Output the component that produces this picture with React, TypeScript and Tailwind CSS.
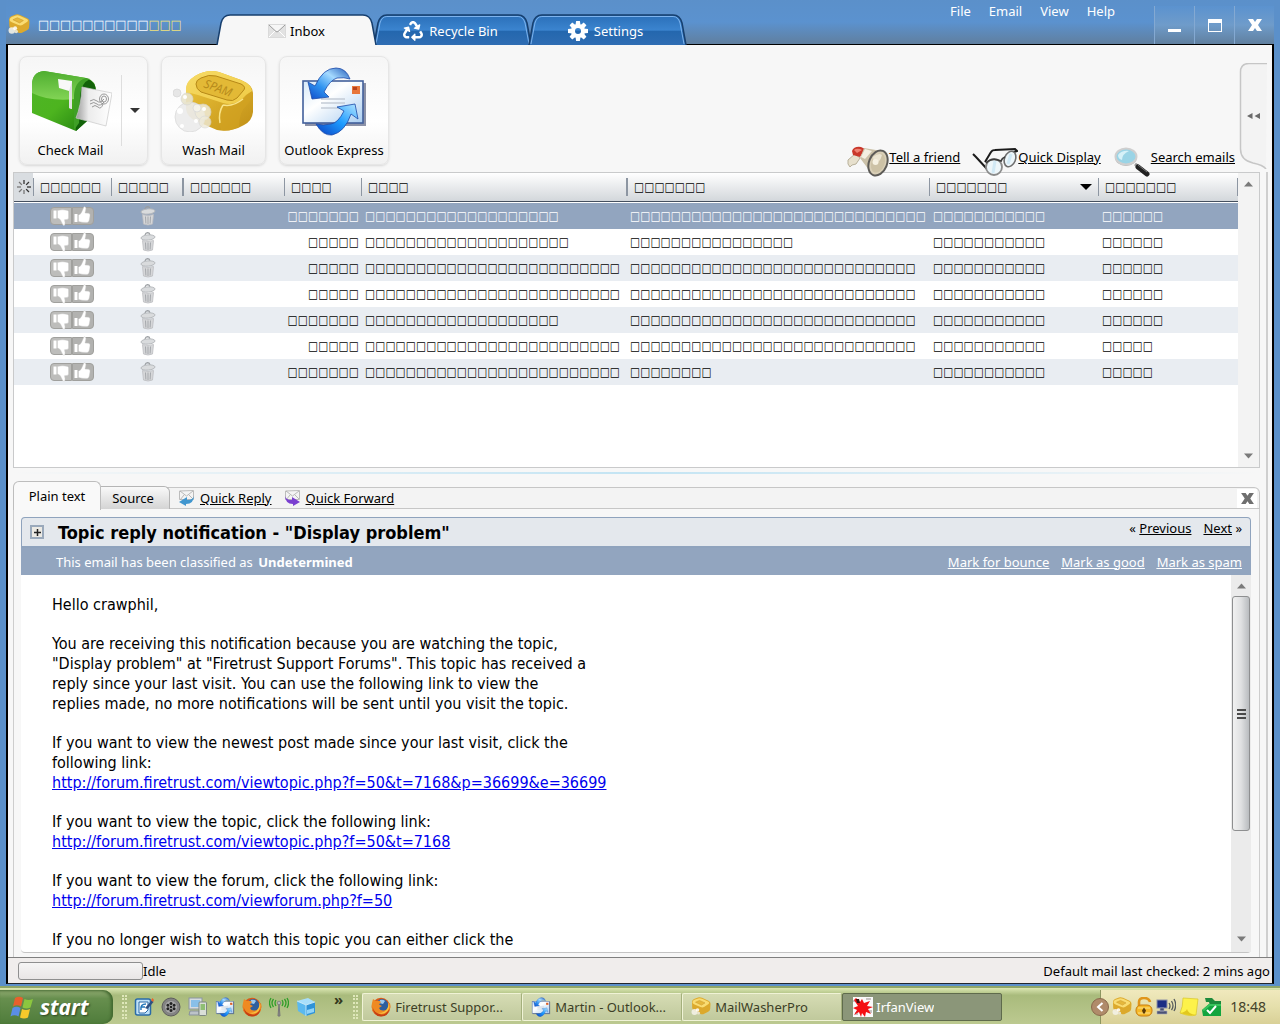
import React from "react";
import { FaRecycle } from "react-icons/fa";

const box = (n: number) => "□".repeat(n);

type Mail = { size: number; from: number; subject: number; date: number; account: number };

const mails: Mail[] = [
  { size: 7, from: 19, subject: 29, date: 11, account: 6 },
  { size: 5, from: 20, subject: 16, date: 11, account: 6 },
  { size: 5, from: 25, subject: 28, date: 11, account: 6 },
  { size: 5, from: 25, subject: 28, date: 11, account: 6 },
  { size: 7, from: 19, subject: 28, date: 11, account: 6 },
  { size: 5, from: 25, subject: 28, date: 11, account: 5 },
  { size: 7, from: 25, subject: 8, date: 11, account: 5 },
];

const columns = [
  { width: "w-[78px]", label: 6, thick: false },
  { width: "w-[71px]", label: 5, thick: true },
  { width: "w-[102px]", label: 6, thick: false },
  { width: "w-[77px]", label: 4, thick: false },
  { width: "w-[265px]", label: 4, thick: true },
  { width: "w-[303px]", label: 7, thick: false },
  { width: "w-[169px]", label: 7, thick: false, sorted: true },
  { width: "w-auto", label: 7, thick: false },
];

/* ---------- Icons ---------- */

function SoapIcon({ className = "" }: { className?: string }) {
  return (
    <svg viewBox="0 0 20 20" className={className} aria-hidden="true">
      <path d="M1 5q0-2 2-3l4-1.500q2-.5 4 .3l6.500 3q2 1 2 3l-.3 5q0 2-2 3l-4 2q-2 1-4 0l-6-3q-2-1-2-3z" fill="#dca92c" />
      <path d="M1.500 5.500q0-2 2-2.800l3.800-1.300q1.700-.5 3.700.4l6 2.700q2 1 .5 2.500l-4.500 3q-1.500.9-3.500 0l-6-2.500q-2-.8-2-2z" fill="#f9dc72" />
      <path d="M4.500 5.200l4-1.800 5.500 2.500-3.500 2.200z" fill="#e5b73c" stroke="#c8962a" strokeWidth=".5" />
      <circle cx="3.500" cy="15" r="3" fill="#f3f1e6" opacity=".9" />
      <circle cx="6.500" cy="13" r="1.800" fill="#fff" opacity=".85" />
      <circle cx="7.500" cy="16" r="1.600" fill="#e8e3cd" />
    </svg>
  );
}

function EnvelopeIcon() {
  return (
    <svg viewBox="0 0 18 14" className="h-[14px] w-[18px]" aria-hidden="true">
      <rect x=".5" y=".5" width="17" height="13" fill="#e2e2e2" stroke="#dadada" />
      <path d="M1 13l6-6M17 13l-6-6" stroke="#fff" />
      <path d="M1 1l7 6.500q1 .8 2 0L17 1" fill="#f6f6f6" stroke="#9b9b9b" />
    </svg>
  );
}

function GearIcon() {
  return (
    <svg viewBox="-10 -10 20 20" className="h-5 w-5" aria-hidden="true">
      {[0, 45, 90, 135, 180, 225, 270, 315].map((a) => (
        <path key={a} d="M-2.600-5L-1.900-10H1.900L2.600-5z" fill="#fff" transform={`rotate(${a})`} />
      ))}
      <circle r="5" fill="none" stroke="#fff" strokeWidth="4" />
    </svg>
  );
}

function MailboxIcon() {
  return (
    <svg viewBox="0 0 82 64" className="h-16 w-[82px]" aria-hidden="true">
      <defs>
        <linearGradient id="mbSide" x1="0" y1="0" x2="1" y2="1">
          <stop offset="0" stopColor="#4fb528" />
          <stop offset=".5" stopColor="#4db41f" />
          <stop offset="1" stopColor="#1c7a0e" />
        </linearGradient>
        <linearGradient id="mbGloss" x1="0" y1="0" x2="0" y2="1">
          <stop offset="0" stopColor="#4fae30" />
          <stop offset="1" stopColor="#82d455" />
        </linearGradient>
        <linearGradient id="mbLetter" x1="0" y1="0" x2="1" y2="0">
          <stop offset="0" stopColor="#9c9c9c" />
          <stop offset=".35" stopColor="#ececec" />
          <stop offset="1" stopColor="#fff" />
        </linearGradient>
      </defs>
      <path d="M2 45V17Q2 4 14 3l42 7q10 2 10 14v21L46 63z" fill="url(#mbSide)" />
      <path d="M2 17Q2 4 14 3l42 7q-10 3-11 17v4Q20 34 2 25z" fill="url(#mbGloss)" />
      <path d="M46 63V28q1-15 12-17 8 3 8 13v21z" fill="#126209" />
      <path d="M44 62V27q1-14 12-17l4 1q-9 4-10 17l-1 27z" fill="#3f9f26" />
      <path d="M52 19l30 6-6 33-30-8q5-12 6-31z" fill="url(#mbLetter)" stroke="#c9c9c9" strokeWidth=".7" />
      <g fill="none" stroke="#8d8d8d" strokeWidth=".9">
        <ellipse cx="74" cy="31" rx="4.500" ry="5" />
        <ellipse cx="74" cy="31" rx="2.500" ry="3" />
        <path d="M60 33q4-3 7 0t7-2M60 36q4-3 7 0t7-2M62 39q3-3 6 0t5-3" />
      </g>
      <path d="M28 11l14 2v28l-3-1V23l-10-3z" fill="#f8f8f8" />
      <path d="M39 23v17l3 1V14z" fill="#e2e2e2" />
    </svg>
  );
}

function WashIcon() {
  return (
    <svg viewBox="0 0 82 64" className="h-16 w-[82px]" aria-hidden="true">
      <defs>
        <linearGradient id="wsTop" x1="0" y1="0" x2="1" y2="1">
          <stop offset="0" stopColor="#f6da66" />
          <stop offset="1" stopColor="#f0cb45" />
        </linearGradient>
        <linearGradient id="wsSide" x1="0" y1="0" x2="1" y2="1">
          <stop offset="0" stopColor="#f0c93e" />
          <stop offset="1" stopColor="#c08f16" />
        </linearGradient>
      </defs>
      <path d="M13 22q0-8 9-14 12-7 24-4l22 8q12 5 12 13v19q-1 9-9 13-14 8-27 5l-21-9q-9-4-10-12z" fill="url(#wsSide)" />
      <path d="M13 21q0-8 9-13 12-7 24-4l22 8q11 5 11 11-5 3-9 8-9 7-20 4l-25-8q-11-3-12-2z" fill="url(#wsTop)" />
      <path d="M50 36q10 2 19-5 5-6 10-7 0 8-5 13-8 7-8 22-10 5-18 3-5-14 2-26z" fill="#d2a322" opacity=".65" />
      <path d="M50 37q10 2 20-6M50 37q-5 8-3 18" fill="none" stroke="#f9e489" strokeWidth="1.500" />
      <path d="M23 16q0-4 5-6 8-4 15-2l25 8q6 3 2 7l-6 7q-4 4-10 2l-26-8q-5-3-5-8z" fill="#e3b936" stroke="#b68817" />
      <text x="30" y="19" transform="rotate(20 30 19)" fontFamily="Noto Sans, sans-serif" fontStyle="italic" fontSize="12" fill="#b88c1c">SPAM</text>
      <g stroke="#d6d6d6" strokeWidth=".7">
        <circle cx="4" cy="25" r="4" fill="#e6e6e6" />
        <circle cx="17" cy="49" r="15" fill="#ececec" opacity=".93" />
        <circle cx="14" cy="31" r="6" fill="#e9e4cc" opacity=".9" />
        <circle cx="30" cy="44" r="8" fill="#efebda" opacity=".85" />
        <circle cx="32" cy="54" r="6" fill="#eeead9" opacity=".8" />
        <circle cx="24" cy="40" r="4" fill="#f6f4ec" opacity=".9" />
      </g>
      <g fill="#fff">
        <circle cx="7" cy="43" r="3" />
        <circle cx="12" cy="29" r="2" />
        <circle cx="31" cy="41" r="2" />
        <circle cx="9" cy="58" r="2" />
        <circle cx="23" cy="53" r="2" />
      </g>
    </svg>
  );
}

function OutlookIcon({ className = "" }: { className?: string }) {
  return (
    <svg viewBox="0 0 66 70" className={className} aria-hidden="true">
      <defs>
        <linearGradient id="oeMail" x1="0" y1="0" x2="1" y2="1">
          <stop offset="0" stopColor="#d5e8f8" />
          <stop offset=".4" stopColor="#fff" />
          <stop offset="1" stopColor="#a9cdf0" />
        </linearGradient>
        <linearGradient id="oeDown" x1="1" y1="0" x2="0" y2="1">
          <stop offset="0" stopColor="#1d57b8" />
          <stop offset=".35" stopColor="#a5daff" />
          <stop offset=".65" stopColor="#2f93f0" />
          <stop offset="1" stopColor="#0e49c8" />
        </linearGradient>
        <linearGradient id="oeUp" x1="0" y1="1" x2="1" y2="0">
          <stop offset="0" stopColor="#0b3fc0" />
          <stop offset=".5" stopColor="#1d9cff" />
          <stop offset="1" stopColor="#b5e6ff" />
        </linearGradient>
      </defs>
      <rect x="4" y="17" width="61" height="43" fill="#3f4a6e" opacity=".6" />
      <rect x="2" y="15" width="60" height="42" fill="url(#oeMail)" stroke="#42609c" strokeWidth="1.600" />
      <path d="M20 33h24M20 37h24M20 42h24" stroke="#c4ccd6" strokeWidth="1.600" />
      <rect x="51" y="20" width="8" height="8" fill="#e8763a" />
      <path d="M52 21h4v3h-4z" fill="#b8431c" />
      <path d="M49 13Q45 2 35 2 22 2 14 20L7 16l4 17 17-2-5-5Q29 14 36 12q7-1 13 1z" fill="url(#oeDown)" stroke="#1c49a8" strokeWidth=".8" />
      <path d="M15 58q7 12 16 11 13-3 19-21l7 5-3-15-18 3 7 4q-6 12-13 13-8 2-15 0z" fill="url(#oeUp)" stroke="#1c49a8" strokeWidth=".8" />
    </svg>
  );
}

function MegaphoneIcon() {
  return (
    <svg viewBox="0 0 42 32" className="h-8 w-[42px] shrink-0" aria-hidden="true">
      <path d="M1 15l7-6 5 4-4 6-4 1-2 2-2-3z" fill="#e7e0cd" stroke="#b8b09a" strokeWidth="1" />
      <path d="M5 6q2-5 9-4l4 2-5 8-7-2z" fill="#c9372a" />
      <path d="M7 5q2-2 6-1l2 1-5 3z" fill="#ef8272" />
      <path d="M17 3l18 3q-9 5-13 19l-9-12z" fill="#cbc1a8" />
      <path d="M14 12l4-8 7 2-7 8z" fill="#f4efe1" />
      <ellipse cx="31" cy="18" rx="9" ry="13" transform="rotate(22 31 18)" fill="#d9cfb7" stroke="#5d5b57" strokeWidth="2" />
      <ellipse cx="31" cy="18" rx="6.500" ry="10" transform="rotate(22 31 18)" fill="#cdc2a6" />
      <path d="M26 12q6-5 9-2-2 8-8 9z" fill="#ece5d2" />
      <circle cx="28.500" cy="17" r="3" fill="#f6f1e2" />
    </svg>
  );
}

function GlassesIcon() {
  return (
    <svg viewBox="0 0 46 30" className="h-[30px] w-[46px] shrink-0" aria-hidden="true">
      <path d="M1 7l3 3 11 12M13 15L19 5q1-2 4-2l20-1 2 2-6 2" fill="none" stroke="#1b1b1b" strokeWidth="2" />
      <ellipse cx="22" cy="20" rx="8" ry="8" fill="#edf6fa" stroke="#8b8b8b" strokeWidth="1.800" />
      <ellipse cx="38" cy="12" rx="5.500" ry="8" transform="rotate(22 38 12)" fill="#edf6fa" stroke="#6e6e6e" strokeWidth="1.600" />
      <path d="M14 16q6-6 15-2 1-3 4-4" fill="none" stroke="#3c3c3c" strokeWidth="1.800" />
      <path d="M23 14l-2 12M39 7l-3 10" stroke="#bfe1f3" strokeWidth="3" opacity=".6" />
    </svg>
  );
}

function MagnifierIcon() {
  return (
    <svg viewBox="0 0 38 30" className="h-[30px] w-[38px] shrink-0" aria-hidden="true">
      <path d="M22 17l4 3" stroke="#999" strokeWidth="3" />
      <path d="M25 20l9 7" stroke="#222" strokeWidth="5" strokeLinecap="round" />
      <path d="M25 18l9 7" stroke="#777" strokeWidth="1" />
      <ellipse cx="13" cy="10.500" rx="11" ry="8.500" fill="#b6b6b6" />
      <ellipse cx="13" cy="9.500" rx="10.500" ry="8" fill="#9ad4e6" stroke="#cfcfcf" strokeWidth="2" />
      <path d="M5 8q4-5 11-4-7 3-7 9-4-1-4-5z" fill="#d6f1f8" />
    </svg>
  );
}

function ThumbDown() {
  return (
    <svg viewBox="0 0 20 20" className="h-5 w-5 shrink-0" aria-hidden="true">
      <path d="M2.500 4.500h3v8h-3z" fill="#fff" />
      <path d="M6.500 4.500q5-1.500 10 0 1.500.5 1 2.500v5q0 1.500-2 1.500l-2 .2q.8 3 .3 5-.6 1.300-1.800.2L9.500 14q-1-1.500-3-2z" fill="#fff" stroke="#c9c9c9" strokeWidth=".4" />
    </svg>
  );
}

function ThumbUp() {
  return (
    <svg viewBox="0 0 20 20" className="h-5 w-5 shrink-0" aria-hidden="true">
      <path d="M1.500 8h3v8h-3z" fill="#fff" />
      <path d="M5.500 9q2-.5 3-2.500L10.500 2q.3-1.700 1.500-1.200 1.500.7.700 3.200L12 7l3.500.2q2 .3 1.500 2.500l-.8 4.500q-.4 2-2 2.200-4.500.3-8.700-1z" fill="#fff" stroke="#c9c9c9" strokeWidth=".4" />
    </svg>
  );
}

function TrashIcon() {
  return (
    <svg viewBox="0 0 16 20" className="h-5 w-4" aria-hidden="true">
      <path d="M5 3q1-3 4-2l1 2" fill="none" stroke="#999da1" strokeWidth="1.300" />
      <ellipse cx="8" cy="5.500" rx="7" ry="2.600" fill="#d9dbdd" stroke="#b3b6b9" strokeWidth=".9" transform="rotate(-5 8 5.500)" />
      <path d="M2.500 8.500q5.500 2 11 0L12.500 18q-4.500 2-9 0z" fill="#d6d7d9" stroke="#bbbdc0" strokeWidth=".8" />
      <path d="M5.500 10.500l.4 7M8 10.500v7.500M10.500 10.500l-.4 7" stroke="#a4a7ab" strokeWidth="1" />
    </svg>
  );
}

function BurstIcon() {
  return (
    <svg viewBox="-8 -8 16 16" className="mx-auto h-4 w-4" aria-hidden="true">
      {[0, 45, 90, 135, 180, 225, 270, 315].map((a, i) => (
        <path key={a} d="M0-3V-7" stroke={i > 3 ? "#777" : "#333"} strokeWidth="1.300" transform={`rotate(${a})`} />
      ))}
    </svg>
  );
}

function MailArrowIcon({ forward = false }: { forward?: boolean }) {
  return (
    <svg viewBox="0 0 17 16" className="h-4 w-[17px]" aria-hidden="true">
      <path d="M1.500 1l14-.5v9h-14z" fill="#f4f4f4" stroke="#bcbcbc" />
      <path d="M2 1l6.500 5L15 1M2 10l4-5M15 9l-4-4" fill="none" stroke="#a8a8a8" strokeWidth=".8" />
      {forward ? (
        <path d="M1 5q0 5 7 5V7l8 5-7 4v-2Q1 14 1 5z" fill="#7a3fd0" />
      ) : (
        <path d="M16 5q0 5-7 5V7l-8 5 7 4v-2q8 0 8-9z" fill="#4096cf" />
      )}
    </svg>
  );
}

function WindowsFlag() {
  return (
    <svg viewBox="0 0 24 23" className="h-[23px] w-6" aria-hidden="true">
      <path d="M5 2q4-2.500 8 0l-2 8.500q-4-2.500-8 0z" fill="#e8602c" />
      <path d="M14.500 3q4 2 8.500 0l-2.500 8.500q-4 2-8 0z" fill="#8cc63f" />
      <path d="M2.500 12q4-2.500 8 0l-2 8.500q-4-2.500-8 0z" fill="#5a8ee6" />
      <path d="M12 13q4 2 8 0L18 21.500q-4 2-8 0z" fill="#f5c92b" />
    </svg>
  );
}

function FirefoxIcon() {
  return (
    <svg viewBox="0 0 20 20" className="h-5 w-5 shrink-0" aria-hidden="true">
      <circle cx="10" cy="10" r="9.300" fill="#d9591a" />
      <circle cx="11" cy="8.500" r="6.500" fill="#2f5f9e" />
      <path d="M9 3q3-1 5 1l-2 3-4-1z" fill="#9cc8ec" />
      <path d="M1 6l1-4 3 2q3-1 5 1L8 7.500l3 1.500-3 2q1 3 5 2.500 4-.5 4.500-5L19 6q1.500 7-3 11-5 3.500-10.500 1Q-.5 14 1 6z" fill="#ef8a22" />
      <path d="M1.500 10q2 7 9 7.500 5 0 8-6-1 8-8.500 8T1.500 10z" fill="#c63f12" />
      <path d="M17.500 5q2 5-1 9-4 4-9 2 7 0 9-5 1-2 1-6z" fill="#f9c440" />
    </svg>
  );
}

function NotesIcon() {
  return (
    <svg viewBox="0 0 20 20" className="h-5 w-5" aria-hidden="true">
      <rect x="1.500" y="2" width="15" height="16" rx="2" fill="#bfe1f8" stroke="#2a6ba8" strokeWidth="1.500" />
      <path d="M5 5h9v8l-3 3H5z" fill="#fff" stroke="#2a6ba8" />
      <path d="M7 13q-1-6 5-6M7 10h4" fill="none" stroke="#2277bb" strokeWidth="1.500" />
      <path d="M11 11l7-8 1.500 2-6 7z" fill="#2e4f80" />
      <path d="M17 3l1.500-2 1.500 2-1 2z" fill="#e8632c" />
    </svg>
  );
}

function ReelIcon() {
  return (
    <svg viewBox="0 0 20 20" className="h-5 w-5" aria-hidden="true">
      <circle cx="10" cy="10" r="9" fill="#838383" stroke="#5d5d5d" />
      <circle cx="10" cy="10" r="6" fill="#a9a9a9" />
      {[0, 60, 120, 180, 240, 300].map((a) => (
        <circle key={a} cy="-3.600" r="1.500" fill="#222" transform={`translate(10 10) rotate(${a})`} />
      ))}
      <circle cx="10" cy="10" r="1.300" fill="#222" />
    </svg>
  );
}

function DevicesIcon() {
  return (
    <svg viewBox="0 0 20 20" className="h-5 w-5" aria-hidden="true">
      <rect x="1" y="1" width="13" height="11" fill="#d5dbe0" stroke="#8b969f" />
      <rect x="3" y="3" width="9" height="7" fill="#88bfe8" />
      <path d="M2 14h9v4H1z" fill="#bcc3c8" stroke="#87919a" />
      <rect x="11" y="5" width="7.500" height="13.500" rx="1" fill="#dadfd8" stroke="#7d8881" />
      <rect x="12.500" y="7" width="4.500" height="6" fill="#8fbf74" />
    </svg>
  );
}

function AntennaIcon() {
  return (
    <svg viewBox="0 0 20 20" className="h-5 w-5" aria-hidden="true">
      <path d="M10 7l-1 12h2z" fill="#8a8a8a" stroke="#777" />
      <circle cx="10" cy="6" r="1.800" fill="#b5b5b5" stroke="#666" strokeWidth=".6" />
      <path d="M7 3q-2 3 0 6M4.500 2q-3 4 0 8M2 1q-3 5 0 10M13 3q2 3 0 6M15.500 2q3 4 0 8M18 1q3 5 0 10" fill="none" stroke="#2f9e28" strokeWidth="1.300" />
    </svg>
  );
}

function CubeIcon() {
  return (
    <svg viewBox="0 0 20 20" className="h-5 w-5" aria-hidden="true">
      <path d="M1 4l11-3 7 4-9 3z" fill="#a8dffb" />
      <path d="M1 4l9 4v11l-8-5z" fill="#5bb9ef" />
      <path d="M10 8l9-3v11l-9 3z" fill="#2f93d8" />
      <path d="M11 13l7-2v4l-7 2z" fill="#8fd3f8" />
      <path d="M1 4l9 4 9-3M10 8v11" fill="none" stroke="#d5f1ff" strokeWidth=".8" />
    </svg>
  );
}

function SplatIcon() {
  return (
    <svg viewBox="0 0 20 20" className="h-5 w-5 shrink-0" aria-hidden="true">
      <rect width="20" height="20" fill="#fafafa" />
      <path d="M0 3h4v2H0zM13 1h5v2h-5zM16 13h3v3h-3zM2 15h3v3H2z" fill="#c9c4c4" />
      <path d="M3 1l4 4 2-3 2 4 6-2-3 5 6 1-5 2 3 5-5-2-1 5-3-4-1 4-2-5-5 3 3-5-4-2 5-2-4-6z" fill="#f40f12" />
      <path d="M3 2l3 0 1 4-3 0z" fill="#401010" />
    </svg>
  );
}

function LockIcon() {
  return (
    <svg viewBox="0 0 18 20" className="h-5 w-[18px]" aria-hidden="true">
      <path d="M4 9V5q0-4 5-4t6 4" fill="none" stroke="#e0951b" strokeWidth="2.600" />
      <rect x="1" y="8" width="16" height="11" rx="5" fill="#f6b928" stroke="#c87d10" />
      <path d="M3 11h12M3 16h12" stroke="#fde28b" />
      <path d="M9 10.500l2 3-1.200 3H8.200L7 13.500z" fill="#5c3b06" />
    </svg>
  );
}

function NetworkIcon() {
  return (
    <svg viewBox="0 0 20 18" className="h-[18px] w-5" aria-hidden="true">
      <rect x="1" y="2" width="10" height="8" fill="#1d2f84" stroke="#8d92a8" />
      <path d="M4 10h4v3H4zM1 13h10v3H1z" fill="#4b5274" stroke="#a8abbc" strokeWidth=".6" />
      <path d="M13 5q2 3 0 6M15.500 3q3 5 0 9M18 1q3.500 6 0 12" fill="none" stroke="#555a5c" strokeWidth="1.300" />
    </svg>
  );
}

function StickyIcon() {
  return (
    <svg viewBox="0 0 20 20" className="h-5 w-5" aria-hidden="true">
      <path d="M4 1l15 1-2 16q-6 2-16-2 3-6 3-15z" fill="#fdf24a" stroke="#d8c52a" strokeWidth=".7" />
      <path d="M1 16q6-1 7-4 1 5 9 6-7 1-16-2z" fill="#e2c81f" />
    </svg>
  );
}

function SafeRemoveIcon() {
  return (
    <svg viewBox="0 0 20 20" className="h-5 w-5" aria-hidden="true">
      <path d="M3 1h7l3 3h6v5H8L7 5H4z" fill="#1d8a3c" />
      <path d="M0 13l7-6h12v12H1z" fill="#12a53e" />
      <path d="M0 13l7-6h12v2H8l-6 5z" fill="#37c35c" />
      <path d="M5 13l3 3 6-7" fill="none" stroke="#fff" strokeWidth="2" />
    </svg>
  );
}

function Triangle({ up = false }: { up?: boolean }) {
  return (
    <svg viewBox="0 0 9 6" className="h-[6px] w-[9px]" aria-hidden="true">
      <path d={up ? "M0 5.500L4.500.5 9 5.500z" : "M0 .5h9L4.500 5.500z"} fill="#7a7a7a" />
    </svg>
  );
}

/* ---------- Header ---------- */

function Tab({ label, icon, active = false }: { label: string; icon: React.ReactNode; active?: boolean }) {
  return (
    <button
      role="tab"
      aria-selected={active}
      className={
        active
          ? "relative z-10 flex h-[31px] w-[161px] items-center justify-center gap-1 pt-[3px] text-black"
          : "relative -ml-1 flex h-[31px] w-[159px] items-center justify-center gap-[6px] pr-1 pt-[3px] text-white"
      }
    >
      <svg viewBox="0 0 160 31" preserveAspectRatio="none" className="absolute inset-0 h-full w-full" aria-hidden="true">
        <defs>
          <linearGradient id="tabBlue" x1="0" y1="0" x2="0" y2="1">
            <stop offset="0" stopColor="#2a6fb8" />
            <stop offset=".5" stopColor="#3b84cf" />
            <stop offset=".55" stopColor="#2467ae" />
            <stop offset="1" stopColor="#2f6db3" />
          </linearGradient>
        </defs>
        <path
          d="M1 31L5 9Q7 1 14 1H146Q153 1 155 9L159 31"
          fill={active ? "#f7f7f7" : "url(#tabBlue)"}
          stroke="#173f6e"
          strokeWidth="1.500"
        />
        {!active && <path d="M3 30L7 9Q9 2.500 14 2.500H146Q151 2.500 153 9L157 30" fill="none" stroke="#7db4ee" />}
      </svg>
      <span className="relative flex">{icon}</span>
      <span className="relative">{label}</span>
    </button>
  );
}

const windowButton = "flex w-10 justify-center border-l border-[#84a9d2] bg-linear-to-b from-[#5b92cf] via-[#6f9cca] via-50% to-[#607f9f]";

function Header() {
  return (
    <header className="flex h-[45px] shrink-0 justify-between border-b border-black bg-linear-to-b from-[#5b90ca] via-[#5b92cf] to-[#607f9f]">
      <div className="flex min-w-0">
        <div className="flex w-[210px] items-center gap-2 pl-[2px] pt-[6px]">
          <SoapIcon className="h-[22px] w-[22px]" />
          <h1 className="whitespace-nowrap font-['DejaVu_Sans_Condensed','DejaVu_Sans',sans-serif] text-[13px] text-white">
            {box(10)}
            <span className="text-[#f1e27a]">{box(3)}</span>
          </h1>
        </div>
        <div role="tablist" className="-mb-px flex items-end">
          <Tab label="Inbox" icon={<EnvelopeIcon />} active />
          <Tab label="Recycle Bin" icon={<FaRecycle className="h-5 w-5" />} />
          <Tab label="Settings" icon={<GearIcon />} />
        </div>
      </div>
      <div className="flex">
        <nav className="flex items-start gap-[18px] pr-[39px] pt-[2px] text-white">
          {["File", "Email", "View", "Help"].map((m) => (
            <button key={m} className="leading-[18px]">
              {m}
            </button>
          ))}
        </nav>
        <div className="mt-[6px] flex text-white">
          <button aria-label="Minimize" className={`${windowButton} items-end pb-3`}>
            <span className="h-[3px] w-[13px] bg-white" />
          </button>
          <button aria-label="Maximize" className={`${windowButton} items-center`}>
            <span className="h-[13px] w-[14px] border border-t-4 border-white" />
          </button>
          <button aria-label="Close" className={`${windowButton} items-center`}>
            <svg viewBox="0 0 14 12" className="h-3 w-[14px]" aria-hidden="true">
              <path d="M0 0h5l2 3 2-3h5l-4 6 4 6H9L7 9l-2 3H0l4-6z" fill="#fff" />
            </svg>
          </button>
        </div>
      </div>
    </header>
  );
}

/* ---------- Toolbar ---------- */

const tile = "flex h-[109px] rounded-lg border border-[#e6e6e6] bg-linear-to-b from-[#f6f6f6] via-white via-60% to-[#f1f1f1] shadow-sm";

function Toolbar() {
  return (
    <div className="flex h-[127px] shrink-0 justify-between pl-[11px]">
      <div className="flex items-start gap-[13px] pt-[11px]">
        <div className={`${tile} w-[129px]`}>
          <button className="flex w-[101px] flex-col items-center justify-end pb-1">
            <MailboxIcon />
            <span className="mt-2 leading-5">Check Mail</span>
          </button>
          <button aria-label="Check mail options" className="my-[18px] flex flex-1 items-center justify-center border-l border-[#dedede]">
            <svg viewBox="0 0 10 5" className="h-[5px] w-[10px]" aria-hidden="true">
              <path d="M0 0h10L5 5z" fill="#333" />
            </svg>
          </button>
        </div>
        <button className={`${tile} w-[105px] flex-col items-center justify-end pb-1`}>
          <WashIcon />
          <span className="mt-2 leading-5">Wash Mail</span>
        </button>
        <button className={`${tile} w-[110px] flex-col items-center justify-end pb-1`}>
          <OutlookIcon className="h-[70px] w-[66px]" />
          <span className="mt-1 whitespace-nowrap leading-5">Outlook Express</span>
        </button>
      </div>
      <div className="flex">
        <div className="relative z-10 -mb-[5px] flex items-end gap-3 pr-1">
          <a href="#tell" className="flex items-end">
            <MegaphoneIcon />
            <span className="mb-[10px] leading-5 underline">Tell a friend</span>
          </a>
          <a href="#display" className="flex items-end">
            <GlassesIcon />
            <span className="mb-[10px] leading-5 underline">Quick Display</span>
          </a>
          <a href="#search" className="flex items-end">
            <MagnifierIcon />
            <span className="mb-[10px] leading-5 underline">Search emails</span>
          </a>
        </div>
        <button aria-label="Show side panel" className="relative mr-[5px] mt-[18px] flex h-[106px] w-7 items-center justify-center">
          <svg viewBox="0 0 28 106" className="absolute inset-0 h-full w-full" aria-hidden="true">
            <path d="M28 .5H10Q1.500.5 1.500 9V86Q1.500 97 14 100 24 102 27 106" fill="#f3f3f3" stroke="#c6c6c6" strokeWidth="1.500" />
          </svg>
          <svg viewBox="0 0 13 6" className="relative h-[6px] w-[13px]" aria-hidden="true">
            <path d="M5.500 0v6L0 3zM13 0v6L7.500 3z" fill="#6a6a6a" />
          </svg>
        </button>
      </div>
    </div>
  );
}

/* ---------- Mail list ---------- */

function MailList() {
  return (
    <section aria-label="Messages" className="flex h-[296px] shrink-0 border border-[#c9cacb] bg-white">
      <div className="min-w-0 flex-1">
        <table className="w-full table-fixed border-separate border-spacing-0 whitespace-nowrap font-['DejaVu_Sans_Condensed','DejaVu_Sans',sans-serif] text-[12px]">
          <thead>
            <tr className="h-[29px]">
              <th aria-label="New" className="w-[19px] border-b border-[#45505f] bg-[#d9dde1] p-0">
                <BurstIcon />
              </th>
              {columns.map((c, i) => (
                <th key={i} scope="col" className={`${c.width} border-b border-[#45505f] bg-linear-to-b from-white to-[#d3d7db] p-0 text-left font-normal`}>
                  <div className={`flex h-[18px] items-center justify-between pl-[6px] pr-[6px] ${i > 0 && columns[i - 1].thick ? "border-l-2 border-[#8d96a2]" : "border-l border-[#8d96a2]"} ${i === columns.length - 1 ? "border-r" : ""}`}>
                    <span>{box(c.label)}</span>
                    {c.sorted && (
                      <svg viewBox="0 0 12 6" className="h-[6px] w-3" aria-hidden="true">
                        <path d="M0 0h12L6 6z" fill="#000" />
                      </svg>
                    )}
                  </div>
                </th>
              ))}
            </tr>
          </thead>
          <tbody className="before:block before:h-px">
            {mails.map((m, i) => (
              <tr key={i} className={i === 0 ? "h-[26px] bg-[#92a5bf] text-white" : i % 2 === 0 ? "h-[26px] bg-[#e9edf2]" : "h-[26px] bg-white"}>
                <td className="p-0" />
                <td className="p-0">
                  <div className="ml-[17px] flex h-[18px] w-11">
                    <button aria-label="Mark as spam" className="flex w-[22px] items-center justify-center rounded-l-[4px] border border-[#a0a09d] bg-[#bdbdbb]">
                      <ThumbDown />
                    </button>
                    <button aria-label="Mark as good" className="flex w-[22px] items-center justify-center rounded-r-[4px] border border-[#a0a09d] bg-[#b2b2b0]">
                      <ThumbUp />
                    </button>
                  </div>
                </td>
                <td className="p-0">
                  <button aria-label="Delete" className="ml-[29px] flex">
                    <TrashIcon />
                  </button>
                </td>
                <td className="p-0" />
                <td className="p-0 pr-[2px] text-right">{box(m.size)}</td>
                <td className="overflow-hidden p-0 pl-1">{box(m.from)}</td>
                <td className="overflow-hidden p-0 pl-1">{box(m.subject)}</td>
                <td className="p-0 pl-1">{box(m.date)}</td>
                <td className="p-0 pl-1">{box(m.account)}</td>
              </tr>
            ))}
          </tbody>
        </table>
      </div>
      <div className="flex w-[21px] flex-col items-center justify-between bg-[#f3f3f3] py-2">
        <Triangle up />
        <Triangle />
      </div>
    </section>
  );
}

/* ---------- Preview ---------- */

function Preview() {
  return (
    <section aria-label="Preview" className="flex min-h-0 flex-1 flex-col">
      <div className="relative z-10 flex shrink-0 items-end">
        <button role="tab" aria-selected="true" className="-mb-px h-[29px] w-[88px] rounded-t-md border border-b-0 border-[#bdbdbd] bg-[#f9f9f9]">
          Plain text
        </button>
        <div className="flex h-[22px] flex-1 items-center rounded-tr-md border border-l-0 border-[#c6c6c6] bg-[#f3f3f3]">
          <button role="tab" aria-selected="false" className="-mt-[2px] h-[23px] w-[69px] rounded-tr-md border-r border-t border-[#b5b5b5] bg-linear-to-b from-[#f9f9f9] to-[#d4d4d4] pr-1">
            Source
          </button>
          <a href="#reply" className="ml-2 flex items-center gap-[5px]">
            <MailArrowIcon />
            <span className="leading-5 underline">Quick Reply</span>
          </a>
          <a href="#forward" className="ml-3 flex items-center gap-[5px]">
            <MailArrowIcon forward />
            <span className="leading-5 underline">Quick Forward</span>
          </a>
          <button aria-label="Close preview" className="ml-auto mr-[2px] flex h-[19px] w-5 items-center justify-center bg-white">
            <svg viewBox="0 0 14 12" className="h-[11px] w-[13px]" aria-hidden="true">
              <path d="M0 0h5l2 3 2-3h5l-4 6 4 6H9L7 9l-2 3H0l4-6z" fill="#6f6f6f" />
            </svg>
          </button>
        </div>
      </div>
      <div className="flex min-h-0 flex-1 flex-col border-x border-[#cdcdcd] pl-[7px] pr-2 pt-2">
        <div className="flex h-[31px] shrink-0 items-center justify-between rounded-t border border-b-2 border-[#8fa3bd] bg-[#e4e8ed] px-2">
          <div className="flex items-center gap-[14px]">
            <button aria-label="Expand details" className="flex h-[14px] w-[14px] items-center justify-center border-2 border-[#9aa9bb] bg-[#eceae4]">
              <svg viewBox="0 0 7 7" className="h-[7px] w-[7px]" aria-hidden="true">
                <path d="M0 3.500h7M3.500 0v7" stroke="#222" strokeWidth="1.500" />
              </svg>
            </button>
            <h2 className="whitespace-nowrap pt-[2px] font-['DejaVu_Sans_Condensed','DejaVu_Sans',sans-serif] text-[18px] font-bold leading-6">
              Topic reply notification - "Display problem"
            </h2>
          </div>
          <div className="flex gap-3 pb-2 leading-5">
            <span>
              « <a href="#previous" className="underline">Previous</a>
            </span>
            <span>
              <a href="#next" className="underline">Next</a> »
            </span>
          </div>
        </div>
        <div className="flex h-[27px] shrink-0 items-center justify-between bg-[#92a5bf] pl-[35px] pr-[9px] text-white">
          <p>
            This email has been classified as <strong className="ml-[2px]">Undetermined</strong>
          </p>
          <div className="flex gap-3 underline">
            <a href="#bounce">Mark for bounce</a>
            <a href="#good">Mark as good</a>
            <a href="#spam">Mark as spam</a>
          </div>
        </div>
        <div className="mb-1 flex min-h-0 flex-1 rounded-b border-b border-[#c4c4c4] bg-white">
          <article className="flex min-w-0 flex-1 flex-col gap-[19px] overflow-hidden pl-[31px] pt-5 font-['DejaVu_Sans_Condensed','DejaVu_Sans',sans-serif] text-[16px] leading-5">
            <p>Hello crawphil,</p>
            <p>
              You are receiving this notification because you are watching the topic,
              <br />
              "Display problem" at "Firetrust Support Forums". This topic has received a
              <br />
              reply since your last visit. You can use the following link to view the
              <br />
              replies made, no more notifications will be sent until you visit the topic.
            </p>
            <p>
              If you want to view the newest post made since your last visit, click the
              <br />
              following link:
              <br />
              <a href="#newest" className="text-[#0000ee] underline">http://forum.firetrust.com/viewtopic.php?f=50&amp;t=7168&amp;p=36699&amp;e=36699</a>
            </p>
            <p>
              If you want to view the topic, click the following link:
              <br />
              <a href="#topic" className="text-[#0000ee] underline">http://forum.firetrust.com/viewtopic.php?f=50&amp;t=7168</a>
            </p>
            <p>
              If you want to view the forum, click the following link:
              <br />
              <a href="#forum" className="text-[#0000ee] underline">http://forum.firetrust.com/viewforum.php?f=50</a>
            </p>
            <p>If you no longer wish to watch this topic you can either click the</p>
          </article>
          <div className="flex w-5 flex-col items-center bg-[#ebebeb] pb-[10px] pt-2">
            <Triangle up />
            <div className="mt-[7px] flex h-[235px] w-[18px] flex-col items-center justify-center gap-[2px] rounded-[3px] border border-[#8e8f90] bg-linear-to-r from-[#f1f1f1] via-[#e0e1e2] to-[#b9bcbf]">
              <span className="h-[2px] w-[9px] bg-[#4a4a4a]" />
              <span className="h-[2px] w-[9px] bg-[#4a4a4a]" />
              <span className="h-[2px] w-[9px] bg-[#4a4a4a]" />
            </div>
            <span className="mt-auto flex">
              <Triangle />
            </span>
          </div>
        </div>
      </div>
    </section>
  );
}

/* ---------- Taskbar ---------- */

function Grip() {
  return <span className="h-6 w-[5px] border-x-2 border-dotted border-[#dfe7ba]" />;
}

function Task({ label, icon, active = false }: { label: string; icon: React.ReactNode; active?: boolean }) {
  return (
    <button
      className={
        active
          ? "flex h-[28px] min-w-0 max-w-[160px] flex-1 items-center gap-[3px] rounded-[2px] border border-[#5f6b4c] bg-[#8b9679] pl-[10px] text-white"
          : "flex h-[28px] min-w-0 max-w-[160px] flex-1 items-center gap-1 rounded-[2px] border border-[#f0f3d6] border-r-[#a4b07c] bg-linear-to-b from-[#d6dcb4] to-[#c0c99c] pl-2 text-[#3c3f26]"
      }
    >
      {icon}
      <span className="truncate">{label}</span>
    </button>
  );
}

function Taskbar() {
  return (
    <footer className="flex h-[38px] shrink-0 items-end border-t-2 border-[#8fa668] bg-linear-to-b from-[#dbe7b2] via-[#a9bb7c] via-20% to-[#bcc990]">
      <button className="flex h-[34px] w-[113px] items-center gap-[6px] rounded-r-[10px] bg-linear-to-b from-[#93ac74] via-[#678f4e] via-25% to-[#4f7c3b] pl-[10px] text-white shadow-[inset_-2px_1px_3px_#42682f]">
        <WindowsFlag />
        <span className="font-['Noto_Sans',sans-serif] text-[21px] font-bold italic leading-6 [text-shadow:1px_1px_2px_#2c4420]">start</span>
      </button>
      <div className="flex h-[34px] items-center gap-[7px] pl-[9px]">
        <Grip />
        <NotesIcon />
        <ReelIcon />
        <DevicesIcon />
        <OutlookIcon className="h-5 w-5" />
        <FirefoxIcon />
        <AntennaIcon />
        <CubeIcon />
      </div>
      <div className="flex h-[34px] items-center gap-[10px] pl-[18px] pr-1">
        <button aria-label="More shortcuts" className="pb-4 text-[15px] font-bold leading-5 text-[#33371c]">
          »
        </button>
        <Grip />
      </div>
      <div className="flex h-[34px] min-w-0 flex-1 items-center">
        <Task label="Firetrust Suppor..." icon={<FirefoxIcon />} />
        <Task label="Martin - Outlook..." icon={<OutlookIcon className="h-5 w-5 shrink-0" />} />
        <Task label="MailWasherPro" icon={<SoapIcon className="h-5 w-5 shrink-0" />} />
        <Task label="IrfanView" icon={<SplatIcon />} active />
      </div>
      <div className="flex h-[34px] items-center gap-[3px] border-l border-[#8c9560] bg-linear-to-b from-[#f0e9bd] via-[#e5dfab] to-[#d9d097] pr-[14px] text-[#44422a]">
        <button aria-label="Show hidden icons" className="-ml-[10px] flex h-[18px] w-[18px] items-center justify-center rounded-full border border-[#8a6a4c] bg-[#b08b6a]">
          <svg viewBox="0 0 8 10" className="h-[10px] w-2" aria-hidden="true">
            <path d="M6.500 1L2 5l4.500 4" fill="none" stroke="#fff" strokeWidth="2" />
          </svg>
        </button>
        <SoapIcon className="h-5 w-5" />
        <LockIcon />
        <NetworkIcon />
        <StickyIcon />
        <SafeRemoveIcon />
        <time className="ml-[5px] text-[14px]">18:48</time>
      </div>
    </footer>
  );
}

/* ---------- Page ---------- */

export default function App() {
  return (
    <div className="flex h-screen flex-col overflow-hidden bg-[#5b90ca] font-['Noto_Sans','Liberation_Sans',sans-serif] text-[13px] leading-5 text-black">
      <div className="mx-[6px] flex min-h-0 flex-1 flex-col">
        <Header />
        <main className="flex min-h-0 flex-1 flex-col border-x-2 border-b border-x-black border-b-[#22272e] bg-[#f7f7f7]">
          <Toolbar />
          <div className="mr-1 flex min-h-0 flex-1 flex-col border-r-2 border-[#cfcfcf] pl-[5px] pr-[6px]">
            <MailList />
            <div className="mb-[7px] mt-1 h-[2px] shrink-0 bg-linear-to-r from-[#f7f7f7] via-[#c3e4f3] to-[#f7f7f7]" />
            <Preview />
          </div>
          <div className="flex h-[26px] shrink-0 items-center justify-between border-t border-[#7f7f7f] bg-[#f0edec] pl-[10px] pr-[2px]">
            <div className="flex items-center">
              <div role="progressbar" aria-label="Progress" aria-valuenow={0} className="h-[18px] w-[125px] rounded-[3px] border border-[#8f8f8f] bg-linear-to-b from-[#f6f5f5] to-[#e9e6e6]" />
              <span>Idle</span>
            </div>
            <span>Default mail last checked: 2 mins ago</span>
          </div>
        </main>
      </div>
      <div className="h-[2px] shrink-0" />
      <Taskbar />
    </div>
  );
}
